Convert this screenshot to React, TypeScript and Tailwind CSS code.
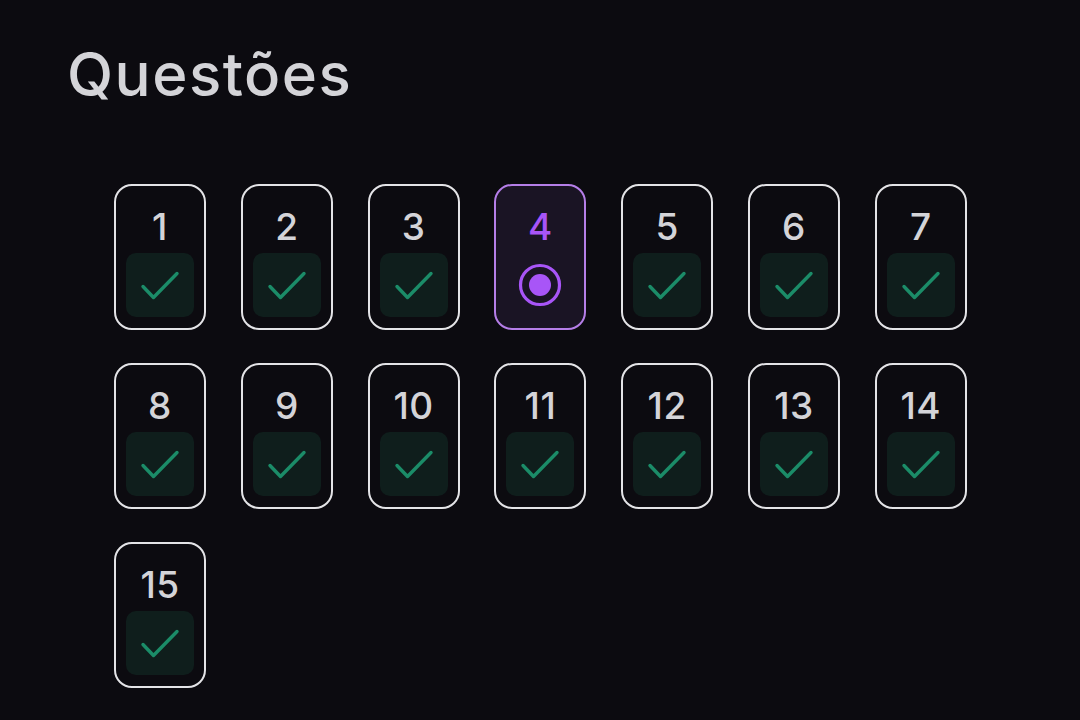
import React from "react";

const questions = Array.from({ length: 15 }, (_, i) => ({ n: i + 1, current: i + 1 === 4 }));

function CheckMark() {
  return (
    <svg width="68" height="64" viewBox="0 0 68 64" fill="none">
      <path d="M17 33.5 27.5 44.5 51 20.5" stroke="#1b8c68" strokeWidth="3.4" strokeLinecap="round" strokeLinejoin="round" />
    </svg>
  );
}

function RadioDot() {
  return (
    <svg width="44" height="44" viewBox="0 0 44 44" fill="none">
      <circle cx="22" cy="22" r="19.5" stroke="#a855f7" strokeWidth="3.2" />
      <circle cx="22" cy="22" r="11" fill="#a855f7" />
    </svg>
  );
}

const App: React.FC = () => {
  return (
    <div className="min-h-[720px] w-[1080px] bg-[#0c0b10] font-['Inter',sans-serif] text-[#d4d4d8]">
      <div className="px-[67px] pt-[37px]">
        <h1 className="text-[60px] font-medium leading-[74px] tracking-[1.5px]">Questões</h1>
      </div>
      <div className="mt-[73px] ml-[114px] grid grid-cols-[repeat(7,92px)] gap-x-[34.8px] gap-y-[33px]">
        {questions.map((q) => (
          <div
            key={q.n}
            className={
              q.current
                ? "flex h-[146px] w-[92px] flex-col items-center rounded-[18px] border-[2.5px] border-[#b57ee8] bg-[#1a1424] px-[9.5px] pb-[10.5px]"
                : "flex h-[146px] w-[92px] flex-col items-center rounded-[18px] border-[2.5px] border-[#e4e4e7] px-[9.5px] pb-[10.5px]"
            }
          >
            <div
              className={
                q.current
                  ? "flex h-[66.5px] items-center pt-[15px] text-[37px] font-medium tracking-[0.5px] text-[#a855f7]"
                  : "flex h-[66.5px] items-center pt-[15px] text-[37px] font-medium tracking-[0.5px] text-[#d4d4d8]"
              }
            >
              {q.n}
            </div>
            {q.current ? (
              <div className="flex h-[64px] w-[68px] items-center justify-center">
                <RadioDot />
              </div>
            ) : (
              <div className="flex h-[64px] w-[68px] items-center justify-center rounded-[10px] bg-[#0f1e1c]">
                <CheckMark />
              </div>
            )}
          </div>
        ))}
      </div>
    </div>
  );
};

export default App;
